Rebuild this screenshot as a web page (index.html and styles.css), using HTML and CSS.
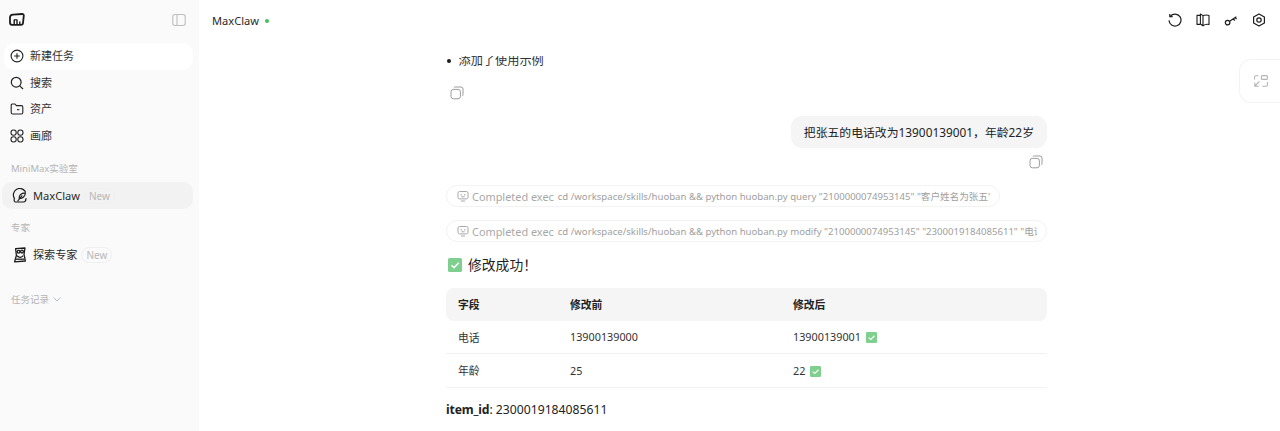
FILE: index.html
```html
<!DOCTYPE html>
<html lang="zh">
<head>
<meta charset="utf-8">
<title>MaxClaw</title>
<link rel="stylesheet" href="styles.css">
</head>
<body>
<div class="app">
  <aside class="sidebar">
    <div class="side-top">
      <svg class="logo" viewBox="0 0 16 13" width="16" height="13" fill="none" stroke="#1c1c1c" stroke-width="1.8" stroke-linejoin="round"><path d="M4 1.6 L13 1 Q14.8 0.9 14.8 2.6 L14 10 Q13.8 11.8 12 11.8 L3 11.8 Q1 11.8 1 9.8 L1 4.4 Q1 1.9 4 1.6 Z"/><path d="M5.2 11.6 V7 M8 11.6 V7 M10.8 11.6 V8.6" stroke-width="1.4"/><path d="M4.8 6.8 H8.4" stroke-width="1.2"/></svg>
      <svg class="panel-icon" viewBox="0 0 14 14" width="14" height="14" fill="none" stroke="#bdbdbd" stroke-width="1.1"><rect x="0.8" y="1.5" width="12.4" height="11" rx="2.2"/><path d="M5 1.5 V12.5"/></svg>
    </div>
    <nav class="nav">
      <a class="nav-item nav-new">
        <svg viewBox="0 0 14 14" width="14" height="14" fill="none" stroke="#222" stroke-width="1.1"><circle cx="7" cy="7" r="5.9"/><path d="M7 4.2 V9.8 M4.2 7 H9.8"/></svg>
        <span>新建任务</span>
      </a>
      <a class="nav-item">
        <svg viewBox="0 0 14 14" width="14" height="14" fill="none" stroke="#222" stroke-width="1.2"><circle cx="6.2" cy="6.2" r="4.9"/><path d="M9.8 9.8 L13 13"/></svg>
        <span>搜索</span>
      </a>
      <a class="nav-item">
        <svg viewBox="0 0 14 14" width="14" height="14" fill="none" stroke="#222" stroke-width="1.1" stroke-linejoin="round"><path d="M1.2 3.2 Q1.2 2 2.4 2 H5 L6.4 3.6 H11.4 Q12.8 3.6 12.8 5 V10.6 Q12.8 12 11.4 12 H2.6 Q1.2 12 1.2 10.6 Z"/><path d="M7 7.7 H9.4"/></svg>
        <span>资产</span>
      </a>
      <a class="nav-item">
        <svg viewBox="0 0 14 14" width="14" height="14" fill="none" stroke="#222" stroke-width="1.1"><rect x="1" y="1" width="5.2" height="5.2" rx="2.4"/><rect x="7.8" y="1" width="5.2" height="5.2" rx="2.4"/><rect x="1" y="7.8" width="5.2" height="5.2" rx="2.4"/><rect x="7.8" y="7.8" width="5.2" height="5.2" rx="2.4"/></svg>
        <span>画廊</span>
      </a>
    </nav>
    <div class="side-label lab-first">MiniMax实验室</div>
    <a class="feature feature-on">
      <svg viewBox="0 0 16 16" width="16" height="16" fill="none" stroke="#1c1c1c" stroke-width="1.2" stroke-linecap="round"><path d="M13.2 3.4 A6.3 6.3 0 0 0 2.4 10.4 Q1.6 13.6 3.4 14 L11.4 14 Q14 13.8 14 10.6"/><path d="M7.2 10.4 C6.6 7.6 9 5 13.4 4.8 C13.4 8.2 10.6 10.6 7.2 10.4 Z"/><path d="M5.8 13 L9.8 7.8"/></svg>
      <span class="feature-name">MaxClaw</span><span class="badge">New</span>
    </a>
    <div class="side-label lab-second">专家</div>
    <a class="feature">
      <svg viewBox="0 0 16 16" width="16" height="16" fill="none" stroke="#1c1c1c" stroke-width="1.3" stroke-linejoin="round"><path d="M3.6 1.6 L13 1 L12 7.4 L13.4 14 L2.6 14.8 L4.4 8.4 Z"/><circle cx="6.6" cy="4.8" r="1.4"/><circle cx="10" cy="4.6" r="1.4"/><path d="M5 8.8 Q8 12 11.2 8.6"/><path d="M4 12.2 H12.4"/></svg>
      <span class="feature-name">探索专家</span><span class="badge">New</span>
    </a>
    <div class="history">任务记录
      <svg viewBox="0 0 8 5" width="8" height="5" fill="none" stroke="#b4b4b4" stroke-width="0.9"><path d="M0.6 0.6 L4 4 L7.4 0.6"/></svg>
    </div>
  </aside>
  <main class="main">
    <header class="topbar">
      <div class="title">MaxClaw<i class="dot"></i></div>
      <div class="tools">
        <svg viewBox="0 0 14 14" width="14" height="14" fill="none" stroke="#1c1c1c" stroke-width="1.2"><path d="M2.4 3.2 A6 6 0 1 1 1 7.4"/><path d="M1.8 0.9 V3.6 H4.6"/></svg>
        <svg viewBox="0 0 14 14" width="14" height="14" fill="none" stroke="#1c1c1c" stroke-width="1.1" stroke-linejoin="round"><path d="M7 2.6 L4.4 1 V11 L7 12.8 Z"/><path d="M4.4 2.4 L1 2.4 V11.4 L4.4 11.4"/><path d="M7 2.6 Q10 1.4 13 2.4 V11.6 Q10 10.6 7 12.8"/></svg>
        <svg viewBox="0 0 14 14" width="14" height="14" fill="none" stroke="#1c1c1c" stroke-width="1.2"><circle cx="3.6" cy="9.6" r="2.3"/><path d="M5.6 8.2 L12.4 3.8 M9.4 5.8 L10.8 7.6 M11.2 4.6 L12.6 6.2"/></svg>
        <svg viewBox="0 0 14 14" width="14" height="14" fill="none" stroke="#1c1c1c" stroke-width="1.2" stroke-linejoin="round"><path d="M7 0.9 L12.4 4 V10 L7 13.1 L1.6 10 V4 Z"/><circle cx="7" cy="7" r="2.2"/></svg>
      </div>
    </header>
    <div class="scroll">
      <section class="chat">
        <ul class="list"><li>添加了使用示例</li></ul>
        <svg class="copy copy-left" viewBox="0 0 14 14" width="14" height="14" fill="none" stroke="#9c9c9c" stroke-width="1"><rect x="1" y="3.4" width="9.4" height="9.4" rx="2.4"/><path d="M3.8 1.6 Q4.2 1 5.2 1 H11 Q13 1 13 3 V8.4 Q13 9.6 12 10.2"/></svg>
        <div class="user-row">
          <div class="bubble">把张五的电话改为13900139001，年龄22岁</div>
          <svg class="copy" viewBox="0 0 14 14" width="14" height="14" fill="none" stroke="#9c9c9c" stroke-width="1"><rect x="1" y="3.4" width="9.4" height="9.4" rx="2.4"/><path d="M3.8 1.6 Q4.2 1 5.2 1 H11 Q13 1 13 3 V8.4 Q13 9.6 12 10.2"/></svg>
        </div>
        <div class="tool-pill tool-short">
          <svg viewBox="0 0 12 12" width="12" height="12" fill="none" stroke="#a8a8a8" stroke-width="1"><rect x="1" y="1.5" width="10" height="7.4" rx="1.6"/><path d="M4 11 H8 M4.2 4 V5.6 M7.8 4 V5.6 M4.4 6.8 H7.6"/></svg>
          <span class="tool-name">Completed exec</span>
          <span class="tool-cmd">cd /workspace/skills/huoban &amp;&amp; python huoban.py query "2100000074953145" "客户姓名为张五"</span>
        </div>
        <div class="tool-pill">
          <svg viewBox="0 0 12 12" width="12" height="12" fill="none" stroke="#a8a8a8" stroke-width="1"><rect x="1" y="1.5" width="10" height="7.4" rx="1.6"/><path d="M4 11 H8 M4.2 4 V5.6 M7.8 4 V5.6 M4.4 6.8 H7.6"/></svg>
          <span class="tool-name">Completed exec</span>
          <span class="tool-cmd">cd /workspace/skills/huoban &amp;&amp; python huoban.py modify "2100000074953145" "2300019184085611" "电话":"13900139001","年龄":22</span>
        </div>
        <h3 class="result"><svg class="check check-lg" viewBox="0 0 14 14"><rect width="14" height="14" rx="1.6" fill="#7fd08f"/><path d="M3.4 7.2 L6 9.6 L10.8 4.8" fill="none" stroke="#fff" stroke-width="1.5"/></svg>修改成功！</h3>
        <table class="table">
          <thead>
            <tr><th class="c1">字段</th><th class="c2">修改前</th><th>修改后</th></tr>
          </thead>
          <tbody>
            <tr><td>电话</td><td>13900139000</td><td>13900139001<svg class="check" viewBox="0 0 14 14"><rect width="14" height="14" rx="1.6" fill="#7fd08f"/><path d="M3.4 7.2 L6 9.6 L10.8 4.8" fill="none" stroke="#fff" stroke-width="1.5"/></svg></td></tr>
            <tr><td>年龄</td><td>25</td><td>22<svg class="check" viewBox="0 0 14 14"><rect width="14" height="14" rx="1.6" fill="#7fd08f"/><path d="M3.4 7.2 L6 9.6 L10.8 4.8" fill="none" stroke="#fff" stroke-width="1.5"/></svg></td></tr>
          </tbody>
        </table>
        <p class="item-id"><strong>item_id</strong>: 2300019184085611</p>
      </section>
    </div>
    <button class="side-tab" type="button" aria-label="切换">
      <svg viewBox="0 0 14 12" width="14" height="12" fill="none" stroke="#b4b4b4" stroke-width="1.1"><rect x="7.4" y="0.6" width="6" height="3.8" rx="1"/><path d="M0.6 4.6 V2 Q0.6 0.8 1.8 0.8 H4.4"/><path d="M13.4 7 V10 Q13.4 11.2 12.2 11.2 H8.4"/><path d="M5.4 6.4 L1 11 M0.8 7.4 V11.3 H4.8"/></svg>
    </button>
  </main>
</div>
</body>
</html>
```

FILE: styles.css
```css
* { box-sizing: border-box; }
html, body { margin: 0; height: 431px; overflow: hidden; background: #fff; }
body { font-family: "Noto Sans", "Noto Sans CJK SC", sans-serif; color: #222; font-size: 11px; }
.app { display: flex; height: 431px; }

.sidebar { width: 199px; flex: none; background: #fafafa; padding: 0 6px 0 2px; }
.side-top { display: flex; justify-content: space-between; align-items: center; height: 43px; padding: 0 7px 4px 7px; }
.nav { display: flex; flex-direction: column; }
.nav-item { display: flex; align-items: center; gap: 6px; height: 26.5px; padding-left: 6px; margin-left: 2px; font-size: 11px; color: #333; border-radius: 10px; }
.nav-item span { padding-bottom: 2px; }
.nav-new { background: #fff; }
.side-label { font-size: 9.5px; color: #b5b5b5; padding-left: 9px; line-height: 14px; }
.lab-first { margin-top: 13px; margin-bottom: 6px; }
.lab-second { margin-top: 12px; margin-bottom: 6px; }
.feature { display: flex; align-items: center; height: 27px; padding-left: 10px; border-radius: 10px; }
.feature-on { background: #f2f2f2; }
.feature-name { margin-left: 5px; padding-bottom: 1px; font-size: 11.1px; color: #2a2a2a; }
.badge { margin-left: 4px; height: 16px; line-height: 14px; padding: 0 4px; font-size: 10px; color: #b8b8b8; border: 1px solid #f0f0f0; border-radius: 8px; }
.history { margin-top: 24px; padding-left: 9px; font-size: 9.5px; color: #b4b4b4; display: flex; align-items: center; gap: 4px; }

.main { flex: 1; min-width: 0; display: flex; flex-direction: column; position: relative; }
.topbar { height: 56px; flex: none; display: flex; justify-content: space-between; align-items: flex-start; padding: 13px 14px 0 13px; }
.title { font-size: 11.1px; line-height: 15px; color: #2a2a2a; display: flex; align-items: center; }
.dot { width: 4px; height: 4px; border-radius: 50%; background: #45c05a; margin-left: 6px; margin-top: 1px; }
.tools { display: flex; gap: 14px; padding-top: 0; }

.scroll { flex: 1; overflow: hidden; }
.chat { width: 601px; margin-left: 247px; margin-top: -4px; }
.list { margin: 0; padding: 0; list-style: none; font-size: 12.2px; line-height: 18px; color: #333; }
.list li { display: flex; align-items: center; gap: 8px; }
.list li::before { content: ""; width: 4px; height: 4px; margin-left: 0.5px; border-radius: 50%; background: #1c1c1c; }
.copy { display: block; }
.copy-left { margin: 16px 0 0 4px; }
.user-row { display: flex; flex-direction: column; align-items: flex-end; margin-top: 16px; }
.bubble { background: #f5f5f5; border-radius: 11px; height: 32px; line-height: 32px; padding: 0 13px; font-size: 11.85px; color: #222; }
.user-row .copy { margin: 7px 4px 0 0; }
.tool-pill { display: flex; align-items: center; height: 22px; margin-top: 13px; padding: 0 9px 0 10px; border: 1px solid #f3f3f3; border-radius: 11px; white-space: nowrap; overflow: hidden; color: #a8a8a8; }
.tool-pill svg { flex: none; }
.tool-short { width: 554px; margin-top: 16px; }
.tool-name { margin-left: 3px; font-size: 10.9px; flex: none; }
.tool-cmd { margin-left: 4px; font-size: 9.6px; color: #a0a0a0; flex: 1; min-width: 0; overflow: hidden; }
.result { margin: 12px 0 0; display: flex; align-items: center; gap: 6px; font-size: 13.8px; font-weight: 400; line-height: 22px; color: #222; }
.check { width: 11px; height: 11px; margin-left: 5px; vertical-align: -2px; }
.check-lg { width: 14px; height: 14px; margin-left: 2px; }
.table { width: 100%; border-collapse: separate; border-spacing: 0; margin-top: 12px; font-size: 10.8px; table-layout: fixed; }
.table th { background: #f5f5f5; height: 32.5px; text-align: left; font-weight: 700; padding: 0 12px; color: #222; }
.table th:first-child { border-radius: 8px 0 0 8px; }
.table th:last-child { border-radius: 0 8px 8px 0; }
.c1 { width: 112px; }
.c2 { width: 223px; }
.table td { height: 33.5px; padding: 0 12px; border-bottom: 1px solid #f2f2f2; color: #333; }
.item-id { margin: 13px 0 0; font-size: 12.2px; line-height: 18px; color: #222; }
.item-id strong { font-weight: 700; letter-spacing: -0.15px; }

.side-tab { position: absolute; right: 0; top: 59px; width: 41px; height: 44px; background: #fff; border: 1px solid #f3f3f3; border-right: 0; border-radius: 12px 0 0 12px; padding: 0 0 0 14px; display: flex; align-items: center; }
```
